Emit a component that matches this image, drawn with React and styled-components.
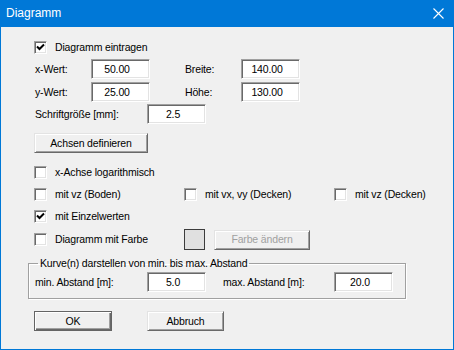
import React from 'react';
import styled, { createGlobalStyle } from 'styled-components';

const Global = createGlobalStyle`
  html, body {
    margin: 0;
    padding: 0;
    background: #f0f0f0;
  }
`;

const Window = styled.div`
  box-sizing: border-box;
  width: 454px;
  height: 350px;
  border: 1px solid #0078d7;
  border-top: none;
  background: #f0f0f0;
  display: flex;
  flex-direction: column;
  font-family: 'Liberation Sans', Arial, sans-serif;
  font-size: 10.5px;
  letter-spacing: -0.15px;
  color: #000;
`;

const TitleBar = styled.div`
  height: 27px;
  margin: 0 -1px;
  background: #0078d7;
  display: flex;
  align-items: center;
  justify-content: space-between;
  padding: 0 10px 0 6px;
  flex-shrink: 0;
`;

const Title = styled.span`
  color: #fff;
  font-size: 12px;
  letter-spacing: 0;
  margin-top: -1px;
`;

const CloseIcon = styled.svg`
  display: block;
  width: 11px;
  height: 11px;
`;

const Client = styled.div`
  display: flex;
  flex-direction: column;
  padding: 0 27px;
`;

const Row = styled.div`
  display: flex;
  align-items: center;
  height: ${(p) => p.$h || 20}px;
  margin-top: ${(p) => p.$mt || 0}px;
  padding-left: ${(p) => (p.$inset === false ? 0 : 6)}px;
  white-space: nowrap;
`;

const Label = styled.span`
  width: ${(p) => p.$w}px;
  flex-shrink: 0;
  padding-left: 1px;
  box-sizing: border-box;
  margin-top: -1px;
`;

const Gap = styled.span`
  width: ${(p) => p.$w}px;
  flex-shrink: 0;
`;

const Field = styled.input`
  box-sizing: border-box;
  width: 59px;
  height: 20px;
  margin: 0;
  padding: 0 7px 0 0;
  font: inherit;
  letter-spacing: inherit;
  color: #000;
  text-align: center;
  background: #fff;
  border: 1px solid;
  border-color: #a0a0a0 #fff #fff #a0a0a0;
  box-shadow: inset 1px 1px #696969, inset -1px -1px #e3e3e3;
  outline: none;
  flex-shrink: 0;
`;

const CheckCell = styled.label`
  display: flex;
  align-items: center;
  width: ${(p) => (p.$w ? `${p.$w}px` : 'auto')};
  flex-shrink: 0;
`;

const Box = styled.span`
  box-sizing: border-box;
  width: 13px;
  height: 13px;
  background: #fff;
  border: 1px solid;
  border-color: #a0a0a0 #fff #fff #a0a0a0;
  box-shadow: inset 1px 1px #696969, inset -1px -1px #e3e3e3;
  display: flex;
  align-items: center;
  justify-content: center;
  flex-shrink: 0;
`;

const BoxText = styled.span`
  margin-left: 8px;
  margin-top: -1px;
`;

const Button = styled.button`
  box-sizing: border-box;
  width: ${(p) => p.$w}px;
  height: 20px;
  margin: 0;
  padding: 0 0 1px;
  font: inherit;
  letter-spacing: inherit;
  color: ${(p) => (p.disabled ? '#a0a0a0' : '#000')};
  background: #f0f0f0;
  border: 1px solid;
  border-color: #e3e3e3 #696969 #696969 #e3e3e3;
  box-shadow: inset 1px 1px #fff, inset -1px -1px #a0a0a0;
  flex-shrink: 0;
`;

const DefaultButton = styled(Button)`
  border: 1px solid #646464;
  box-shadow: inset 1px 1px #fff, inset -1px -1px #696969, inset -2px -2px #a0a0a0;
`;

const Swatch = styled.span`
  box-sizing: border-box;
  width: 21px;
  height: 21px;
  border: 1px solid #3c3c3c;
  background: #e0e0e0;
  margin-right: 9px;
  flex-shrink: 0;
`;

const Group = styled.fieldset`
  box-sizing: border-box;
  width: 378px;
  margin: 7px 0 0;
  padding: 2px 0 6px 5px;
  border: 1px solid #a0a0a0;
  box-shadow: inset 1px 1px #fff, 1px 1px #fff;
  min-inline-size: 0;
`;

const Legend = styled.legend`
  margin-left: 4px;
  padding: 0 2px;
  line-height: 13px;
  height: 13px;
`;

function Check({ checked }) {
  return (
    <Box>
      {checked && (
        <svg width="9" height="9" viewBox="0 0 9 9">
          <path d="M1 3.5 L3.5 6 L8 1.5" stroke="#000" strokeWidth="2" fill="none" />
        </svg>
      )}
    </Box>
  );
}

function CheckItem({ checked, label, w }) {
  return (
    <CheckCell $w={w}>
      <Check checked={checked} />
      <BoxText>{label}</BoxText>
    </CheckCell>
  );
}

export default function App() {
  return (
    <>
      <Global />
      <Window>
        <TitleBar>
          <Title>Diagramm</Title>
          <CloseIcon viewBox="0 0 11 11">
            <path d="M0.5 0.5 L10.5 10.5 M10.5 0.5 L0.5 10.5" stroke="#fff" strokeWidth="1.1" />
          </CloseIcon>
        </TitleBar>
        <Client>
          <Row $h={13} $mt={14}>
            <CheckItem checked label="Diagramm eintragen" />
          </Row>
          <Row $mt={5}>
            <Label $w={57}>x-Wert:</Label>
            <Field readOnly value="50.00" />
            <Gap $w={34} />
            <Label $w={57}>Breite:</Label>
            <Field readOnly value="140.00" />
          </Row>
          <Row $mt={3}>
            <Label $w={57}>y-Wert:</Label>
            <Field readOnly value="25.00" />
            <Gap $w={34} />
            <Label $w={57}>Höhe:</Label>
            <Field readOnly value="130.00" />
          </Row>
          <Row $mt={2}>
            <Label $w={113}>Schriftgröße [mm]:</Label>
            <Field readOnly value="2.5" />
          </Row>
          <Row $mt={9}>
            <Button $w={114}>Achsen definieren</Button>
          </Row>
          <Row $h={13} $mt={13}>
            <CheckItem label="x-Achse logarithmisch" />
          </Row>
          <Row $h={13} $mt={9}>
            <CheckItem w={150} label="mit vz (Boden)" />
            <CheckItem w={150} label="mit vx, vy (Decken)" />
            <CheckItem label="mit vz (Decken)" />
          </Row>
          <Row $h={13} $mt={9}>
            <CheckItem checked label="mit Einzelwerten" />
          </Row>
          <Row $h={21} $mt={6}>
            <CheckItem w={150} label="Diagramm mit Farbe" />
            <Swatch />
            <Button $w={96} disabled>
              Farbe ändern
            </Button>
          </Row>
          <Group>
            <Legend>Kurve(n) darstellen von min. bis max. Abstand</Legend>
            <Row $inset={false}>
              <Label $w={113}>min. Abstand [m]:</Label>
              <Field readOnly value="5.0" />
              <Gap $w={16} />
              <Label $w={112}>max. Abstand [m]:</Label>
              <Field readOnly value="20.0" />
            </Row>
          </Group>
          <Row $mt={12}>
            <DefaultButton $w={78}>OK</DefaultButton>
            <Gap $w={35} />
            <Button $w={77}>Abbruch</Button>
          </Row>
        </Client>
      </Window>
    </>
  );
}
